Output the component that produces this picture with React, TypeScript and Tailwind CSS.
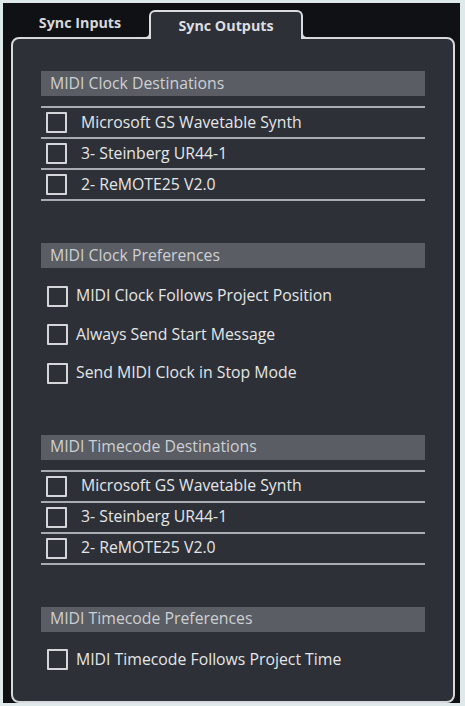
import React from 'react';

const clockDestinations = ['Microsoft GS Wavetable Synth', '3- Steinberg UR44-1', '2- ReMOTE25 V2.0'];
const clockPrefs = ['MIDI Clock Follows Project Position', 'Always Send Start Message', 'Send MIDI Clock in Stop Mode'];
const timecodeDestinations = ['Microsoft GS Wavetable Synth', '3- Steinberg UR44-1', '2- ReMOTE25 V2.0'];
const timecodePrefs = ['MIDI Timecode Follows Project Time'];

const Checkbox = () => (
    <span className="w-[21px] h-[21px] shrink-0 border-2 border-[#d4d6d9] rounded-[1px]" />
);

const SectionHeader = ({ title }: { title: string }) => (
    <div className="h-[25px] bg-[#5a5d63] flex items-center pl-[9px] text-[15.8px] text-[#cdd0d4]">
        {title}
    </div>
);

// list with divider lines between rows
const DestinationList = ({ items }: { items: string[] }) => (
    <div className="mt-[10px] border-t-2 border-[#a9adb3]">
        {items.map((item) => (
            <div key={item} className="h-[31px] flex items-center pl-[5px] gap-[14px] border-b-2 border-[#a9adb3]">
                <Checkbox />
                <span className="text-[15.8px] text-[#e4e6e8]">{item}</span>
            </div>
        ))}
    </div>
);

const PrefList = ({ items }: { items: string[] }) => (
    <div className="mt-[9px]">
        {items.map((item) => (
            <div key={item} className="h-[38.5px] flex items-center pl-[6px] gap-[8px]">
                <Checkbox />
                <span className="text-[15.8px] text-[#e4e6e8]">{item}</span>
            </div>
        ))}
    </div>
);

export default function App() {
    return (
        <div
            className="w-[465px] h-[706px] bg-[#dfe9eb] pt-[3px] pl-[3px] pr-[5px] pb-[3px]"
            style={{ fontFamily: '"Open Sans", "Noto Sans", sans-serif' }}
        >
            <div className="h-full bg-[#0f1114] pl-[8px] pr-[5px] flex flex-col">
                {/* Tabs */}
                <div className="h-[34px] flex items-end shrink-0">
                    <div className="w-[138px] h-[28px] flex items-center justify-center text-[14.3px] font-bold text-[#d6d8db]">
                        Sync Inputs
                    </div>
                    <div className="relative z-10 w-[154px] h-[29px] -mb-[2px] bg-[#2d3036] border-2 border-b-0 border-[#dadcdf] rounded-t-[6px] flex items-center justify-center text-[14.3px] font-bold text-[#dcdee1]">
                        {/* flares where the tab meets the panel edge */}
                        <span className="absolute -left-[8px] bottom-0 w-[8px] h-[8px] border-r-2 border-b-2 border-[#dadcdf] rounded-br-[6px] bg-[#0f1114]" />
                        <span className="absolute -right-[8px] bottom-0 w-[8px] h-[8px] border-l-2 border-b-2 border-[#dadcdf] rounded-bl-[6px] bg-[#0f1114]" />
                        Sync Outputs
                    </div>
                </div>

                {/* Panel */}
                <div className="flex-1 bg-[#2d3036] border-2 border-[#d6d8db] rounded-[8px] px-[28px] pt-[32px]">
                    <SectionHeader title="MIDI Clock Destinations" />
                    <DestinationList items={clockDestinations} />

                    <div className="mt-[42px]">
                        <SectionHeader title="MIDI Clock Preferences" />
                        <PrefList items={clockPrefs} />
                    </div>

                    <div className="mt-[42px]">
                        <SectionHeader title="MIDI Timecode Destinations" />
                        <DestinationList items={timecodeDestinations} />
                    </div>

                    <div className="mt-[42px]">
                        <SectionHeader title="MIDI Timecode Preferences" />
                        <PrefList items={timecodePrefs} />
                    </div>
                </div>
            </div>
        </div>
    );
}
